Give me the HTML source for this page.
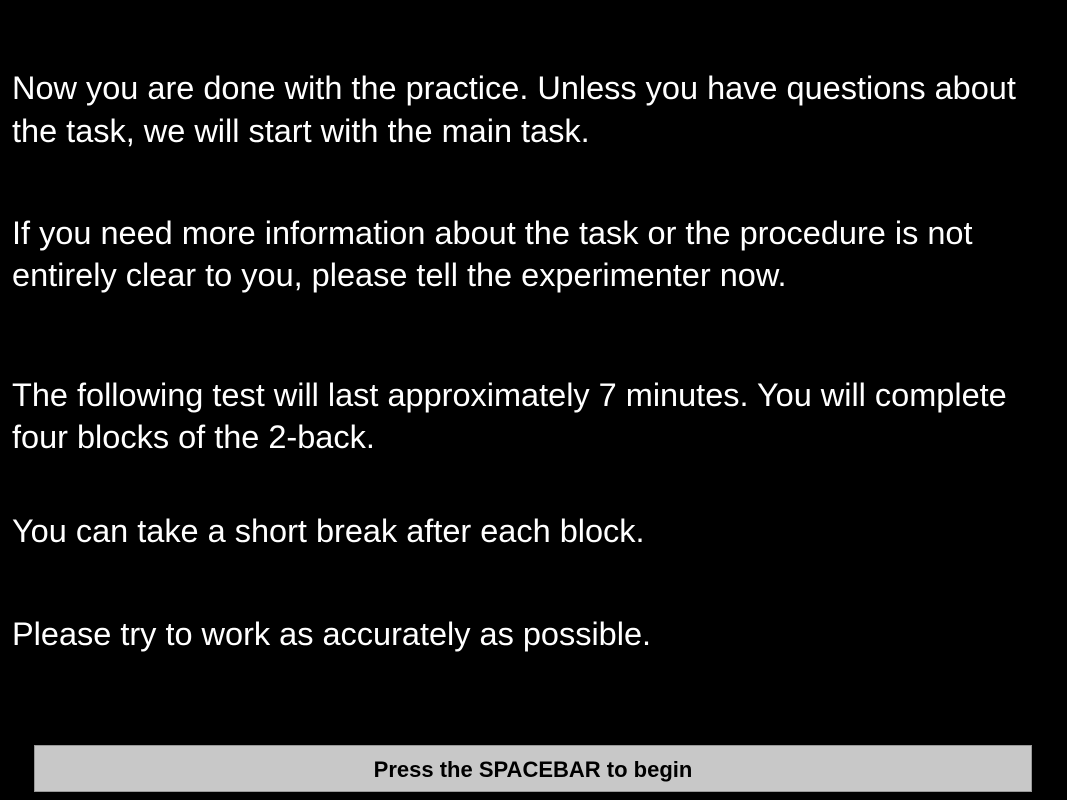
<!DOCTYPE html>
<html><head><meta charset="utf-8"><style>
html,body{margin:0;padding:0;background:#000;width:1067px;height:800px;overflow:hidden}
.l{position:absolute;left:12px;color:#fff;font-family:"Liberation Sans",sans-serif;font-size:32px;line-height:40px;white-space:nowrap;transform-origin:0 50%;transform:scaleX(1.015)}
.btn{position:absolute;left:34px;top:745px;width:998px;height:47px;background:#c8c8c8;border:1px solid #999;box-sizing:border-box;text-align:center;line-height:47px;font-family:"Liberation Sans",sans-serif;font-weight:bold;font-size:22px;color:#000}
</style></head><body>
<div class="l" style="top:68px">Now you are done with the practice. Unless you have questions about</div>
<div class="l" style="top:111px">the task, we will start with the main task.</div>
<div class="l" style="top:213px">If you need more information about the task or the procedure is not</div>
<div class="l" style="top:255px">entirely clear to you, please tell the experimenter now.</div>
<div class="l" style="top:375px">The following test will last approximately 7 minutes. You will complete</div>
<div class="l" style="top:417px">four blocks of the 2-back.</div>
<div class="l" style="top:511px">You can take a short break after each block.</div>
<div class="l" style="top:614px">Please try to work as accurately as possible.</div>
<div class="btn">Press the SPACEBAR to begin</div>
</body></html>
